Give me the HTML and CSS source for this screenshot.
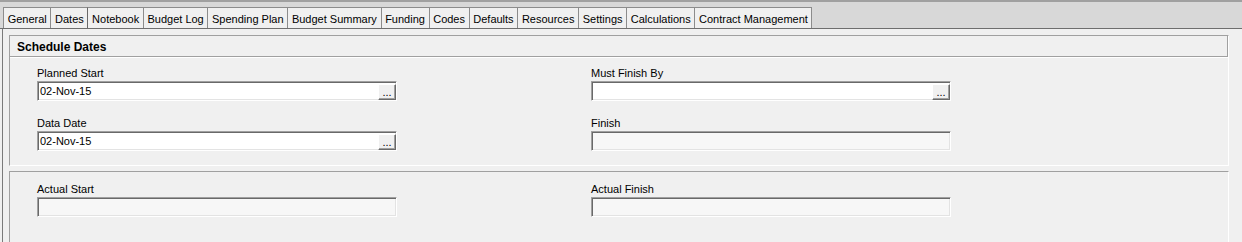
FILE: index.html
```html
<!DOCTYPE html>
<html lang="en">
<head>
  <meta charset="UTF-8" />
  <title>Project Details - Dates</title>
  <link rel="stylesheet" href="styles.css">
</head>
<body>
  <div class="topbar"></div>

  <div class="tabs">
    <div class="tab">General</div>
    <div class="tab active">Dates</div>
    <div class="tab">Notebook</div>
    <div class="tab">Budget Log</div>
    <div class="tab">Spending Plan</div>
    <div class="tab">Budget Summary</div>
    <div class="tab">Funding</div>
    <div class="tab">Codes</div>
    <div class="tab">Defaults</div>
    <div class="tab">Resources</div>
    <div class="tab">Settings</div>
    <div class="tab">Calculations</div>
    <div class="tab">Contract Management</div>
  </div>

  <div class="page">
    <div class="page-inner">

      <!-- Schedule dates group -->
      <div class="group">
        <div class="group-title">Schedule Dates</div>
        <div class="fields">
          <div class="field">
            <div class="label">Planned Start</div>
            <div class="box">
              <span class="value">02-Nov-15</span>
              <span class="pick">...</span>
            </div>
          </div>
          <div class="field">
            <div class="label">Must Finish By</div>
            <div class="box">
              <span class="value"></span>
              <span class="pick">...</span>
            </div>
          </div>
          <div class="field">
            <div class="label">Data Date</div>
            <div class="box">
              <span class="value">02-Nov-15</span>
              <span class="pick">...</span>
            </div>
          </div>
          <div class="field">
            <div class="label">Finish</div>
            <div class="box disabled"></div>
          </div>
        </div>
      </div>

      <!-- Actual dates group -->
      <div class="group actuals">
        <div class="fields">
          <div class="field">
            <div class="label">Actual Start</div>
            <div class="box disabled"></div>
          </div>
          <div class="field">
            <div class="label">Actual Finish</div>
            <div class="box disabled"></div>
          </div>
        </div>
      </div>

    </div>
  </div>
</body>
</html>
```

FILE: styles.css
```css
* {
  box-sizing: border-box;
}

body {
  margin: 0;
  width: 1242px;
  height: 242px;
  overflow: hidden;
  font-family: "Liberation Sans", Arial, sans-serif;
  font-size: 11px;
  color: #000;
  background-color: #f0f0f0;
}

.topbar {
  height: 2px;
  background-color: #a0a0a0;
}

/* Tab strip */
.tabs {
  display: flex;
  align-items: flex-end;
  height: 26px;
  padding-left: 3px;
  background-color: #d8d8d8;
}

.tab {
  height: 21px;
  padding: 2px 3.65px 0 3.65px;
  line-height: 18px;
  white-space: nowrap;
  background-color: #f0f0f0;
  border: 1px solid #8c8c8c;
  border-bottom: none;
  margin-right: -1px;
}

.tab.active {
  position: relative;
  z-index: 1;
  border-right-color: #696969;
}

/* Page body under the tabs */
.page {
  border-top: 1px solid #6e6e6e;
  height: 214px;
}

.page-inner {
  margin-left: 2px;
  height: 100%;
  border-left: 1px solid #7a7a7a;
  padding: 6px 0 0 6px;
}

.group {
  width: 1220px;
  border-top: 1px solid #a0a0a0;
  border-left: 1px solid #a0a0a0;
  border-right: 1px solid #fff;
  border-bottom: 1px solid #fff;
}

.group-title {
  height: 21px;
  padding: 1px 0 0 7px;
  line-height: 20px;
  font-size: 12px;
  font-weight: bold;
  border-bottom: 1px solid #a0a0a0;
  border-right: 1px solid #a0a0a0;
  box-shadow: 0 1px 0 #fff;
}

.fields {
  display: grid;
  grid-template-columns: 360px 360px;
  column-gap: 194px;
  row-gap: 15px;
  padding: 9px 0 14px 27px;
}

.actuals {
  margin-top: 5px;
  height: 80px;
  border-bottom: none;
}

.actuals .fields {
  padding-top: 10px;
}

.label {
  height: 13px;
  line-height: 14px;
  margin-bottom: 2px;
}

/* Sunken date box */
.box {
  display: flex;
  justify-content: space-between;
  height: 20px;
  background-color: #fff;
  border: 1px solid;
  border-color: #a0a0a0 #fff #fff #a0a0a0;
  box-shadow: inset 1px 1px 0 #696969, inset -1px -1px 0 #e3e3e3;
}

.box.disabled {
  background-color: #f7f7f7;
}

.value {
  padding: 1px 0 0 2px;
  line-height: 16px;
}

.pick {
  align-self: flex-end;
  width: 18px;
  height: 16px;
  line-height: 14px;
  text-align: center;
  font-size: 11px;
  background-color: #f0f0f0;
  border: 1px solid;
  border-color: #fff #696969 #696969 #fff;
  box-shadow: inset -1px -1px 0 #a0a0a0;
}
```
